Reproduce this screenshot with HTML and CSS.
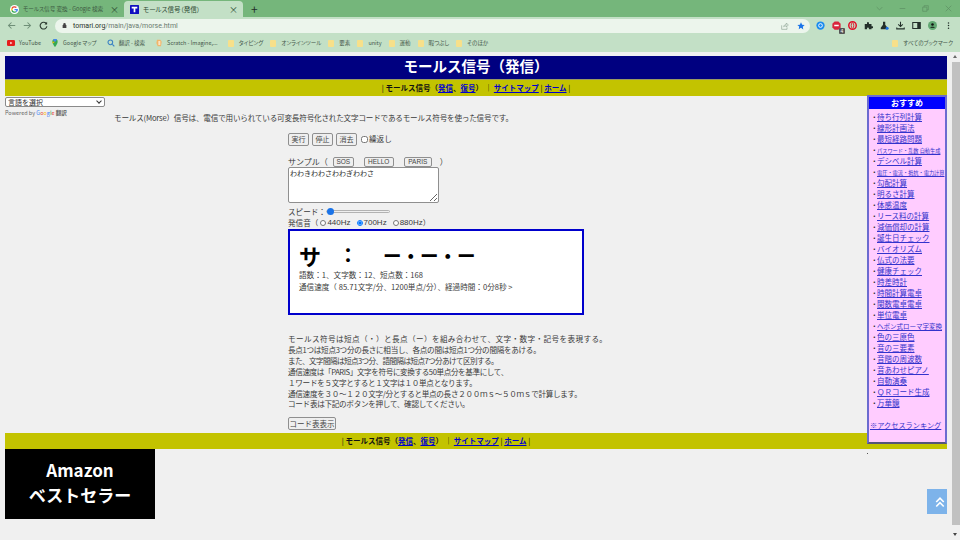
FILE: index.html
```html
<!DOCTYPE html>
<html lang="ja">
<head>
<meta charset="utf-8">
<title>モールス信号（発信）</title>
<link rel="stylesheet" href="styles.css">
</head>
<body>
<div class="browser">
  <div class="tabbar">
    <div class="tab inactive">
      <svg class="favicon" viewBox="0 0 16 16"><circle cx="8" cy="8" r="8" fill="#fff"/><path d="M8 4.500a3.500 3.500 0 0 1 2.400.9l1.800-1.800A6.200 6.200 0 0 0 2.600 5.400l2 1.600A3.600 3.600 0 0 1 8 4.500z" fill="#ea4335"/><path d="M2.600 5.400a6.200 6.200 0 0 0 0 5.200l2-1.600a3.600 3.600 0 0 1 0-2z" fill="#fbbc05"/><path d="M2.600 10.600a6.200 6.200 0 0 0 9.400 2l-1.900-1.500A3.600 3.600 0 0 1 4.600 9z" fill="#34a853"/><path d="M14 7h-6v2.400h3.400a3 3 0 0 1-1.300 1.700l1.900 1.500A6 6 0 0 0 14 7z" fill="#4285f4"/></svg>
      <span class="tab-title">モールス信号 変換 - Google 検索</span>
      <span class="tab-close">×</span>
    </div>
    <div class="tab active">
      <svg class="favicon" viewBox="0 0 16 16"><rect width="16" height="16" rx="1" fill="#1010c0"/><path d="M3 3h10v3H9.500v7h-3V6H3z" fill="#fff"/></svg>
      <span class="tab-title">モールス信号（発信）</span>
      <span class="tab-close">×</span>
    </div>
    <span class="newtab">+</span>
    <div class="winctrl">
      <svg viewBox="0 0 10 10"><path d="M1 3l4 4 4-4" fill="none" stroke="#5d8f63" stroke-width="1"/></svg>
      <svg viewBox="0 0 10 10"><path d="M1 5h8" stroke="#5d8f63" stroke-width="1"/></svg>
      <svg viewBox="0 0 10 10"><path d="M1 3h6v6H1zM3 3V1h6v6H7" fill="none" stroke="#5d8f63" stroke-width="1"/></svg>
      <svg viewBox="0 0 10 10"><path d="M1 1l8 8M9 1l-8 8" stroke="#5d8f63" stroke-width="1"/></svg>
    </div>
  </div>
  <div class="toolbar">
    <svg class="navicon" viewBox="0 0 12 12"><path d="M11 6H2M6 2L2 6l4 4" fill="none" stroke="#6f8f78" stroke-width="1.400"/></svg>
    <svg class="navicon" viewBox="0 0 12 12"><path d="M1 6h9M6 2l4 4-4 4" fill="none" stroke="#6f8f78" stroke-width="1.400"/></svg>
    <svg class="navicon" viewBox="0 0 12 12"><path d="M10 4A4.500 4.500 0 1 0 10.500 7" fill="none" stroke="#2b3b30" stroke-width="1.500"/><path d="M10.800 1v3.500H7.300z" fill="#2b3b30"/></svg>
    <div class="omnibox">
      <svg class="lock" viewBox="0 0 8 10"><path d="M2 4V3a2 2 0 0 1 4 0v1h1v5H1V4z" fill="#444"/></svg>
      <span class="url"><b>tomari.org</b>/main/java/morse.html</span>
      <svg class="omni-icon" viewBox="0 0 12 12"><path d="M1 5v6h8V8M4 7c.5-2.500 2.500-3.500 4-3.500V1.500L11 4.500 8 7.500V5.600C6.500 5.600 5 6 4 7z" fill="none" stroke="#8fa596" stroke-width="1"/></svg>
      <svg class="omni-icon" viewBox="0 0 12 12"><path d="M6 .5l1.700 3.600 3.800.5-2.800 2.700.7 3.900L6 8.800 2.600 10.700l.7-3.900L.5 4.600l3.800-.5z" fill="#1a73e8"/></svg>
    </div>
    <div class="extensions">
      <svg viewBox="0 0 12 12"><circle cx="6" cy="6" r="5.500" fill="#1a8cef"/><circle cx="6" cy="6" r="2.500" fill="none" stroke="#fff" stroke-width="1.200"/></svg>
      <span class="ext-abp"><svg viewBox="0 0 12 12"><path d="M3.500.5h5l3 3v5l-3 3h-5l-3-3v-5z" fill="#d9263c"/><path d="M3 6h6" stroke="#fff" stroke-width="2"/></svg><i class="badge">4</i></span>
      <svg viewBox="0 0 12 12"><circle cx="6" cy="6" r="5" fill="none" stroke="#e0122a" stroke-width="2"/><ellipse cx="6" cy="6" rx="1.700" ry="3.600" fill="none" stroke="#e0122a" stroke-width="1.200"/></svg>
      <svg viewBox="0 0 12 12"><path d="M1 4h3V2.500a1.300 1.300 0 0 1 2.600 0V4H10v3h1.200a1.300 1.300 0 0 1 0 2.600H10V11H6.500V9.800a1.200 1.200 0 0 0-2.400 0V11H1z" fill="#23302a"/></svg>
      <svg viewBox="0 0 12 12"><path d="M4 1h3v4l3 4v2H1V9l3-4z" fill="#23302a"/><circle cx="9.500" cy="9.500" r="2" fill="#1a73e8"/></svg>
      <svg viewBox="0 0 12 12"><path d="M6 1v6M3 4.500L6 7.500l3-3M1 8.500v2h10v-2" fill="none" stroke="#23302a" stroke-width="1.400"/></svg>
      <svg viewBox="0 0 12 12"><path d="M1 2h10v8H1z" fill="none" stroke="#23302a" stroke-width="1.400"/><path d="M7 2h4v8H7z" fill="#23302a"/></svg>
      <svg viewBox="0 0 14 14"><circle cx="7" cy="7" r="7" fill="#62a873"/><circle cx="7" cy="5.500" r="2" fill="#111"/><path d="M3.500 10.500c.5-2 6.500-2 7 0z" fill="#111"/></svg>
      <svg viewBox="0 0 4 12"><circle cx="2" cy="2.500" r="1" fill="#23302a"/><circle cx="2" cy="6" r="1" fill="#23302a"/><circle cx="2" cy="9.500" r="1" fill="#23302a"/></svg>
    </div>
  </div>
  <div class="bookmarks">
    <span class="bm"><svg viewBox="0 0 12 9"><rect width="12" height="9" rx="2" fill="#e61e1e"/><path d="M5 2.500l3 2-3 2z" fill="#fff"/></svg>YouTube</span>
    <span class="bm"><svg viewBox="0 0 10 12"><path d="M5 0a4 4 0 0 1 4 4c0 3-4 8-4 8S1 7 1 4a4 4 0 0 1 4-4z" fill="#34a853"/><path d="M2 1.500A4 4 0 0 1 8 1L5 4.500z" fill="#4285f4"/><path d="M1 4c0 .8.300 1.800.800 2.800L5 4z" fill="#fbbc05"/></svg>Google マップ</span>
    <span class="bm"><svg viewBox="0 0 12 12"><circle cx="5" cy="5" r="3.500" fill="none" stroke="#3b82c4" stroke-width="1.600"/><path d="M8 8l3 3" stroke="#3b82c4" stroke-width="1.800"/></svg>翻訳 - 検索</span>
    <span class="bm"><svg viewBox="0 0 10 12"><path d="M2 1h5l2 3-1 7H3L1 6z" fill="#f2b56b"/><path d="M4 3h3v6H4z" fill="#fbe3c2"/></svg>Scratch - Imagine,...</span>
    <span class="bm folder">タイピング</span>
    <span class="bm folder">オンラインツール</span>
    <span class="bm folder">要素</span>
    <span class="bm folder">unity</span>
    <span class="bm folder">運動</span>
    <span class="bm folder">暇つぶし</span>
    <span class="bm folder">そのほか</span>
    <span class="bm-all folder">すべてのブックマーク</span>
  </div>
</div>
<div class="viewport">
  <div class="page">
    <h1 class="title">モールス信号（発信）</h1>
    <nav class="nav">
      | <b>モールス信号（<a href="#">発信</a>、<a href="#">復号</a>）</b> ｜ <a href="#">サイトマップ</a> | <a href="#">ホーム</a> |
    </nav>
    <div class="content">
      <div class="translate">
        <div class="lang-wrap"><select class="lang"><option>言語を選択</option></select></div>
        <div class="powered">Powered by <span class="g1">G</span><span class="g2">o</span><span class="g3">o</span><span class="g1">g</span><span class="g4">l</span><span class="g2">e</span> <b>翻訳</b></div>
      </div>
      <p class="lead">モールス(Morse）信号は、電信で用いられている可変長符号化された文字コードであるモールス符号を使った信号です。</p>
      <div class="main-col">
        <div class="controls">
          <button>実行</button><button>停止</button><button>消去</button><label class="repeat"><input type="checkbox">繰返し</label>
        </div>
        <div class="samples">サンプル（<button>SOS</button><button>HELLO</button><button>PARIS</button>）</div>
        <textarea class="input">わわきわわさわわぎわわさ</textarea>
        <div class="speed">スピード：<input type="range" min="0" max="100" value="0"></div>
        <div class="tone">発信音（<label><input type="radio" name="t">440Hz</label><label><input type="radio" name="t" checked>700Hz</label><label><input type="radio" name="t">880Hz</label>）</div>
        <div class="display">
          <div class="signal"><span class="sig-char">サ</span><span class="sig-colon">：</span><span class="sig-code">ー・ー・ー</span></div>
          <div class="stats">語数：1、文字数：12、短点数：168</div>
          <div class="stats">通信速度（ 85.71文字/分、1200単点/分）、経過時間：0分8秒 &gt;</div>
        </div>
        <div class="desc">
          <p>モールス符号は短点（・）と長点（ー）を組み合わせて、文字・数字・記号を表現する。</p>
          <p>長点1つは短点3つ分の長さに相当し、各点の間は短点1つ分の間隔をあける。</p>
          <p>また、文字間隔は短点3つ分、語間隔は短点7つ分あけて区別する。</p>
          <p>通信速度は「PARIS」文字を符号に変換する50単点分を基準にして、</p>
          <p>１ワードを５文字とすると１文字は１０単点となります。</p>
          <p>通信速度を３０～１２０文字/分とすると単点の長さ２００ｍｓ～５０ｍｓで計算します。</p>
          <p>コード表は下記のボタンを押して、確認してください。</p>
        </div>
        <button class="codebtn">コード表表示</button>
      </div>
    </div>
    <nav class="nav bottom">
      | <b>モールス信号（<a href="#">発信</a>、<a href="#">復号</a>）</b> ｜ <a href="#">サイトマップ</a> | <a href="#">ホーム</a> |
    </nav>
    <div class="amazon"><span>Amazon</span><span>ベストセラー</span></div>
    <aside class="side">
      <div class="side-head">おすすめ</div>
      <ul class="side-list">
        <li><a href="#">待ち行列計算</a></li>
        <li><a href="#">線形計画法</a></li>
        <li><a href="#">最短経路問題</a></li>
        <li class="small"><a href="#">パスワード・乱数 自動生成</a></li>
        <li><a href="#">デシベル計算</a></li>
        <li class="small"><a href="#">電圧・電流・抵抗・電力計算</a></li>
        <li><a href="#">勾配計算</a></li>
        <li><a href="#">明るさ計算</a></li>
        <li><a href="#">体感温度</a></li>
        <li><a href="#">リース料の計算</a></li>
        <li><a href="#">減価償却の計算</a></li>
        <li><a href="#">誕生日チェック</a></li>
        <li><a href="#">バイオリズム</a></li>
        <li><a href="#">仏式の法要</a></li>
        <li><a href="#">健康チェック</a></li>
        <li><a href="#">時差時計</a></li>
        <li><a href="#">時間計算電卓</a></li>
        <li><a href="#">関数電卓電卓</a></li>
        <li><a href="#">単位電卓</a></li>
        <li class="mid"><a href="#">ヘボン式ローマ字変換</a></li>
        <li><a href="#">色の三原色</a></li>
        <li><a href="#">音の三要素</a></li>
        <li><a href="#">音階の周波数</a></li>
        <li><a href="#">音あわせピアノ</a></li>
        <li><a href="#">自動演奏</a></li>
        <li><a href="#">ＱＲコード生成</a></li>
        <li><a href="#">万華鏡</a></li>
      </ul>
      <a class="ranking" href="#">※アクセスランキング</a>
    </aside>
    <span class="dot"></span>
    <div class="totop"><svg viewBox="0 0 16 16"><path d="M3 8l5-5 5 5M3 14l5-5 5 5" fill="none" stroke="#fff" stroke-width="2.200"/></svg></div>
  </div>
  <div class="scrollbar"><div class="thumb"></div></div>
</div>
</body>
</html>
```
FILE: styles.css
```css
* { box-sizing: border-box; }
html, body { margin: 0; padding: 0; width: 960px; height: 540px; overflow: hidden; }
body { font-family: "Noto Sans CJK JP", "Liberation Sans", sans-serif; font-size: 8px; color: #3a3a3a; background: #f0f0f0; display: flex; flex-direction: column; }
.browser { flex: none; height: 52px; background: #c3e0c6; font-feature-settings: "palt"; }
.tabbar { height: 17px; background: #75b67b; display: flex; align-items: flex-end; padding-left: 3px; }
.tab { height: 16px; width: 121px; display: flex; align-items: center; padding: 0 5px 0 7px; gap: 4px; font-size: 5.600px; color: #3d5a42; }
.tab.active { background: #c3e0c6; border-radius: 4px 4px 0 0; color: #2e4a33; padding-left: 6px; width: 119px; font-size: 6.500px; }
.favicon { width: 9px; height: 9px; flex: none; }
.tab-title { flex: 1; white-space: nowrap; overflow: hidden; }
.tab-close { font-size: 9px; color: #2e4a33; line-height: 1; }
.newtab { font-size: 12px; line-height: 16px; margin-left: 8px; color: #23302a; }
.winctrl { margin-left: auto; display: flex; gap: 16px; padding: 0 8px 5px 0; }
.winctrl svg { width: 7px; height: 7px; display: block; }
.toolbar { height: 17px; display: flex; align-items: center; padding-left: 7px; }
.navicon { width: 9px; height: 9px; margin-right: 7px; flex: none; }
.omnibox { width: 755px; height: 14px; margin-left: 0; background: #ecf5ec; border-radius: 7px; display: flex; align-items: center; padding: 0 5px 0 7px; font-size: 7px; color: #6a7a6e; font-family: "Roboto", sans-serif; }
.lock { width: 5px; height: 7px; margin-right: 6px; flex: none; }
.url { flex: 1; }
.url b { font-weight: 400; color: #26332a; }
.omni-icon { width: 8px; height: 8px; margin-left: 8px; flex: none; }
.extensions { display: flex; align-items: center; gap: 7px; margin-left: 6px; }
.extensions > svg, .ext-abp > svg { width: 9px; height: 9px; display: block; }
.extensions > svg:last-child { width: 3px; margin-left: 3px; }
.ext-abp { position: relative; }
.badge { position: absolute; right: -4px; bottom: -4px; width: 6px; height: 6px; font: 5px/6px "Liberation Sans", sans-serif; text-align: center; color: #fff; background: #555; border-radius: 1px; }
.bookmarks { height: 18px; display: flex; align-items: center; padding-left: 7px; font-size: 5.500px; color: #45574a; }
.bm { display: flex; align-items: center; gap: 4px; margin-right: 10px; white-space: nowrap; }
.bm.folder { margin-right: 7px; }
.bm svg { width: 8px; height: 8px; flex: none; }
.folder::before { content: ""; width: 6px; height: 7px; border-radius: 1px; background: #f7e08a; flex: none; margin-right: 1px; }
.bm-all { margin-left: auto; margin-right: 7px; display: flex; align-items: center; gap: 4px; white-space: nowrap; }

.viewport { flex: 1; display: flex; min-height: 0; }
.page { flex: 1; min-width: 0; position: relative; padding: 4px 0 0 5px; overflow: hidden; }
.title { margin: 0; width: 942px; height: 23px; background: #000080; color: #fff; text-align: center; font-size: 14.500px; line-height: 20px; font-weight: 700; }
.nav { width: 942px; height: 17px; margin-top: 0; border-top: 1px solid #9a9a60; background: #c3c300; text-align: center; font-size: 7.500px; line-height: 15px; color: #111; }
.nav a { color: #0000cc; font-weight: 700; }
.content { position: relative; width: 862px; height: 337px; }
.translate { position: absolute; left: 0; top: 1px; }
.lang-wrap { position: relative; width: 100px; }
.lang-wrap::after { content: ""; position: absolute; right: 4px; top: 2px; width: 3px; height: 3px; border-right: 1px solid #333; border-bottom: 1px solid #333; transform: rotate(45deg); pointer-events: none; }
.lang { display: block; -webkit-appearance: none; appearance: none; width: 100px; height: 10px; font: 7px/8px "Noto Sans CJK JP", sans-serif; padding: 0 0 0 2px; background: #fff; border: 1px solid #8a8a8a; border-radius: 2px; color: #333; }
.powered { font-size: 5.500px; line-height: 7px; margin-top: 3px; color: #666; }
.g1 { color: #4285f4; } .g2 { color: #ea4335; } .g3 { color: #fbbc05; } .g4 { color: #34a853; }
.lead { margin: 0; padding: 16px 0 0 109px; font-size: 7.600px; letter-spacing: -.2px; line-height: 12px; white-space: nowrap; }
.main-col { margin: 8px 0 0 283px; width: 440px; }
button { font: 7px/11px "Noto Sans CJK JP", sans-serif; background: #efefef; border: 1px solid #8f8f8f; border-radius: 2px; padding: 0 3px; height: 13px; color: #444; }
.controls { display: flex; align-items: center; gap: 3px; height: 14px; }
.controls button { width: 21px; padding: 0; }
.repeat { display: flex; align-items: center; font-size: 7.600px; line-height: 12px; margin-left: 1px; }
.repeat input { width: 7px; height: 7px; margin: 0 1px 0 0; }
.samples { margin-top: 10px; height: 11px; display: flex; align-items: center; font-size: 8px; line-height: 11px; }
.samples button { height: 10px; margin-right: 10px; padding: 0; font: 6.500px/8px "Liberation Sans", sans-serif; }
.samples button:nth-of-type(1) { margin-left: 5px; width: 21px; }
.samples button:nth-of-type(2) { width: 30px; }
.samples button:nth-of-type(3) { width: 28px; margin-right: 8px; }
.input { display: block; margin: 0; width: 151px; height: 36px; font: 7px/9px "Noto Sans CJK JP", sans-serif; padding: 1px; border: 1px solid #8f8f8f; border-radius: 2px; background: #fff; color: #333; resize: both; }
.speed { height: 11px; margin-top: 3px; display: flex; align-items: center; font-size: 7.600px; line-height: 11px; }
.speed input { -webkit-appearance: none; appearance: none; width: 64px; height: 7px; margin: 0; background: transparent; }
.speed input::-webkit-slider-runnable-track { height: 3px; background: #efefef; border: 1px solid #b2b2b2; border-radius: 2px; }
.speed input::-webkit-slider-thumb { -webkit-appearance: none; appearance: none; width: 7px; height: 7px; margin-top: -3px; border-radius: 50%; background: #1a73e8; border: none; }
.tone { height: 11px; display: flex; align-items: center; font-size: 7.600px; line-height: 11px; gap: 0; }
.tone label { display: flex; align-items: center; margin-right: 6px; font-family: "Liberation Sans", sans-serif; font-size: 8px; }
.tone label:first-of-type { margin-left: 2px; }
.tone label:last-of-type { margin-right: 0; }
.tone input { width: 6px; height: 6px; margin: 0 1px 0 0; }
.display { width: 296px; height: 86px; margin-top: 1px; background: #fff; border: 2px solid #0000cc; padding: 13px 9px; }
.signal { display: flex; align-items: center; height: 22px; margin-bottom: 3px; font-size: 22px; font-weight: 700; color: #000; line-height: 22px; white-space: nowrap; }
.sig-char { width: 39px; }
.sig-colon { width: 45px; font-size: 20px; }
.sig-code { font-size: 18.500px; font-weight: 700; }
.stats { font-size: 7.600px; line-height: 12px; white-space: nowrap; }
.desc { margin-top: 19px; font-size: 7.600px; line-height: 10.900px; white-space: nowrap; }
.desc p { margin: 0; }
.desc p:nth-child(1) { letter-spacing: .4px; }
.desc p:nth-child(2) { letter-spacing: -.3px; }
.desc p:nth-child(3) { letter-spacing: -.6px; }
.desc p:nth-child(4) { letter-spacing: -.4px; }
.desc p:nth-child(5) { letter-spacing: -.3px; }
.desc p:nth-child(6) { letter-spacing: -.3px; }
.desc p:nth-child(7) { letter-spacing: -.3px; }
.codebtn { display: block; margin-top: 7px; width: 48px; height: 13px; padding: 0; font-size: 7.500px; }
.nav.bottom { height: 16px; border-top: none; line-height: 15px; padding-right: 80px; }
.amazon { width: 150px; height: 70px; background: #000; color: #fff; display: flex; flex-direction: column; align-items: center; padding-bottom: 5px; justify-content: center; font-size: 17px; font-weight: 700; line-height: 25px; }
.side { position: absolute; left: 867px; top: 43px; width: 80px; height: 349px; background: #ffccff; border: 2px solid #6b6bd0; border-bottom-color: #55557a; }
.side-head { margin: 0; height: 12px; background: #0000ff; color: #fff; font-size: 8px; font-weight: 700; line-height: 12px; text-align: center; }
.side-list { list-style: none; margin: 0; padding: 2px 0 0 3px; font-size: 8px; }
.side-list li { height: 11px; line-height: 11px; white-space: nowrap; }
.side-list li::before { content: "·"; display: inline-block; width: 5px; font-weight: 700; color: #222; }
.side-list a, .ranking { color: #3333cc; }
.side-list a { font-size: 7.500px; }
.small a { font-size: 5.200px; }
.mid a { font-size: 6.500px; }
.ranking { display: block; margin: 12px 0 0 1px; font-size: 7.200px; line-height: 11px; white-space: nowrap; }
.dot { position: absolute; left: 867px; top: 401px; width: 1px; height: 1px; background: #555; }
.totop { position: absolute; left: 927px; top: 437px; width: 25px; height: 25px; background: #7db3ea; display: flex; align-items: center; justify-content: center; }
.totop svg { width: 12px; height: 12px; }
.scrollbar { flex: none; width: 13px; background: #f0f0f0; position: relative; }
.scrollbar::before, .scrollbar::after { content: ""; position: absolute; left: 6px; width: 0; height: 0; border-left: 2.500px solid transparent; border-right: 2.500px solid transparent; }
.scrollbar::before { top: 3px; border-bottom: 3px solid #6a6a6a; }
.scrollbar::after { bottom: 4px; border-top: 3px solid #444; }
.thumb { margin: 10px 0 0 5px; width: 8px; height: 463px; background: #c1c1c1; }
```
